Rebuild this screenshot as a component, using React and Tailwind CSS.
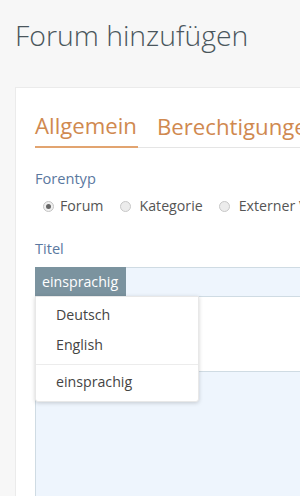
export default function App() {
  const font = { fontFamily: '"Open Sans", "Noto Sans", sans-serif' };
  return (
    <div className="w-[300px] h-[496px] overflow-hidden bg-[#f7f7f7] pl-[15px]" style={font}>
      <h1 className="pt-[17px] text-[28.4px] leading-[36px] font-light text-[#4a565c] whitespace-nowrap">
        Forum hinzufügen
      </h1>
      <div className="mt-[34px] h-[500px] bg-white border-l border-t border-[#ebebeb] pl-[19px] pt-[23px] overflow-hidden">
        <div className="flex items-end border-b border-[#e5e5e5] whitespace-nowrap">
          <div className="shrink-0 pr-[1px] pb-[5px] text-[22.2px] leading-[30px] text-[#d08950] border-b-2 border-[#e2a470] -mb-px">
            Allgemein
          </div>
          <div className="shrink-0 ml-[19px] pb-[5px] text-[22.2px] leading-[30px] text-[#d08950]">
            Berechtigungen
          </div>
        </div>
        <div className="mt-[20px] text-[14.6px] leading-[20px] text-[#5a78a0]">Forentyp</div>
        <div className="mt-[8px] flex items-center text-[14.2px] leading-[20px] text-[#555] whitespace-nowrap">
          <span className="shrink-0 ml-[8px] w-[11px] h-[11px] rounded-full border border-[#c4c4c4] bg-[#f0f0f0] flex items-center justify-center">
            <span className="w-[5px] h-[5px] rounded-full bg-[#666]" />
          </span>
          <span className="shrink-0 ml-[6px]">Forum</span>
          <span className="shrink-0 ml-[16px] w-[11px] h-[11px] rounded-full border border-[#c8c8c8] bg-[#ececec]" />
          <span className="shrink-0 ml-[9px]">Kategorie</span>
          <span className="shrink-0 ml-[16px] w-[11px] h-[11px] rounded-full border border-[#c8c8c8] bg-[#ececec]" />
          <span className="shrink-0 ml-[9px]">Externer Verweis</span>
        </div>
        <div className="mt-[22px] text-[14.6px] leading-[20px] text-[#5a78a0]">Titel</div>
        <div className="relative mt-[9px]">
          <div className="flex h-[30px] border-y border-[#cfdbe3] bg-[#eef5fd]">
            <div className="w-[91px] -my-px h-[30px] bg-[#7b939f] text-white text-[14.2px] leading-[30px] pl-[7px] whitespace-nowrap">
              einsprachig
            </div>
          </div>
          <div className="h-[74px]" />
          <div className="h-[200px] border-t border-l border-[#cfdbe3] bg-[#eef5fd]" />
          <div className="absolute left-0 top-[29px] w-[164px] bg-white rounded-b-[3px] shadow-[0_1px_4px_rgba(0,0,0,0.18)] border border-[#e8e8e8] text-[14.2px] text-[#444] pt-[3px]">
            <div className="pl-[20px] h-[30px] leading-[30px]">Deutsch</div>
            <div className="pl-[20px] h-[30px] leading-[30px]">English</div>
            <div className="mt-[4px] border-t border-[#ececec] pl-[20px] h-[37px] leading-[33px]">einsprachig</div>
          </div>
        </div>
      </div>
    </div>
  );
}
